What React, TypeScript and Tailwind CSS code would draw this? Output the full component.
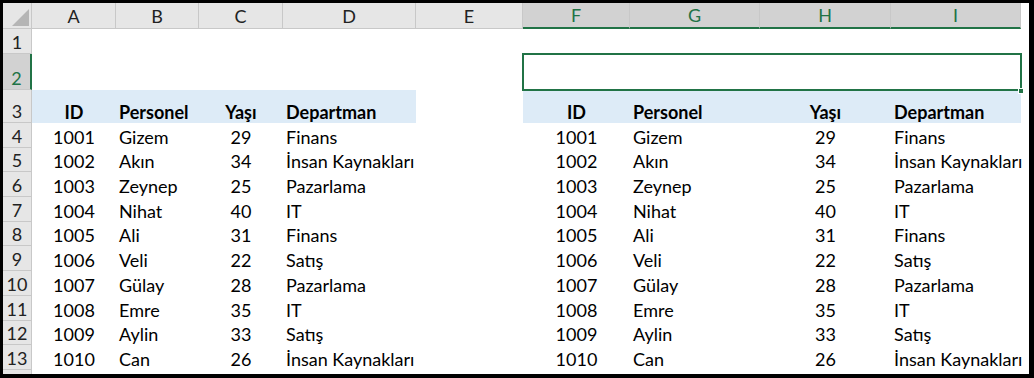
import React from "react";

const cols = ["A", "B", "C", "D", "E", "F", "G", "H", "I"];
const selCols = ["F", "G", "H", "I"];

const people = [
  ["1001", "Gizem", "29", "Finans"],
  ["1002", "Akın", "34", "İnsan Kaynakları"],
  ["1003", "Zeynep", "25", "Pazarlama"],
  ["1004", "Nihat", "40", "IT"],
  ["1005", "Ali", "31", "Finans"],
  ["1006", "Veli", "22", "Satış"],
  ["1007", "Gülay", "28", "Pazarlama"],
  ["1008", "Emre", "35", "IT"],
  ["1009", "Aylin", "33", "Satış"],
  ["1010", "Can", "26", "İnsan Kaynakları"],
];

function RowHead({ n, h, active }: { n?: number; h: string; active?: boolean }) {
  return (
    <div
      className={`${h} flex items-end justify-center pb-[2px] border-b border-[#c8c8c8] ${
        active
          ? "bg-[#d2d2d2] text-[#217346] border-r-2 border-r-[#217346]"
          : "bg-[#e6e6e6] text-[#222] border-r border-r-[#c8c8c8]"
      }`}
    >
      {n}
    </div>
  );
}

function Cell({ children, align = "left", h, bold }: { children?: React.ReactNode; align?: "left" | "center"; h: string; bold?: boolean }) {
  return (
    <div
      className={`${h} flex items-end pb-[2px] whitespace-nowrap overflow-visible ${
        align === "center" ? "justify-center" : "justify-start pl-[3px]"
      } ${bold ? "font-bold" : ""}`}
    >
      {children}
    </div>
  );
}

export default function App() {
  const rowH = "h-[24.7px]";
  return (
    <div className="w-[1034px] h-[378px] bg-white overflow-hidden border-black border-l-[3px] border-t-[3px] border-r-[5px] border-b-[4px] font-['Lato','Liberation_Sans',sans-serif] text-[18px] leading-none text-black">
      <div className="grid grid-cols-[29px_84px_83px_84px_133px_107px_107px_130px_131px_130px_1fr]">
        {/* column headers */}
        <div className="h-[26px] bg-[#e6e6e6] border-b border-r border-[#c8c8c8] relative flex items-end justify-end p-[2px]">
          <svg width="17" height="17" viewBox="0 0 17 17">
            <polygon points="17,0 17,17 0,17" fill="#b5b5b5" />
          </svg>
        </div>
        {cols.map((c) => {
          const sel = selCols.includes(c);
          return (
            <div
              key={c}
              className={`h-[26px] flex items-center justify-center border-r border-[#c8c8c8] ${
                sel
                  ? "bg-[#d2d2d2] text-[#217346] border-b-2 border-b-[#217346]"
                  : "bg-[#e6e6e6] text-[#222] border-b border-b-[#c8c8c8]"
              }`}
            >
              {c}
            </div>
          );
        })}
        <div className="h-[26px] bg-white" />

        {/* row 1 */}
        <RowHead n={1} h="h-[25px]" />
        {Array.from({ length: 10 }).map((_, i) => (
          <div key={i} className="h-[25px]" />
        ))}

        {/* row 2 */}
        <RowHead n={2} h="h-[36px]" active />
        {Array.from({ length: 5 }).map((_, i) => (
          <div key={i} className="h-[36px]" />
        ))}
        <div className="col-span-4 h-[36px] relative">
          <div className="absolute -left-[1px] -top-[1px] -right-[1px] -bottom-[1px] border-2 border-[#217346]" />
          <div className="absolute -right-[3px] -bottom-[4px] w-[6px] h-[6px] bg-[#217346] border border-white" />
        </div>
        <div className="h-[36px]" />

        {/* row 3 headers */}
        <RowHead n={3} h="h-[33px]" />
        <div className="col-span-4 h-[33px] bg-[#ddebf7] grid grid-cols-[84px_83px_84px_133px]">
          <Cell h="h-[33px]" align="center" bold>ID</Cell>
          <Cell h="h-[33px]" bold>Personel</Cell>
          <Cell h="h-[33px]" align="center" bold>Yaşı</Cell>
          <Cell h="h-[33px]" bold>Departman</Cell>
        </div>
        <div className="h-[33px]" />
        <div className="col-span-4 h-[33px] bg-[#ddebf7] grid grid-cols-[107px_130px_131px_130px]">
          <Cell h="h-[33px]" align="center" bold>ID</Cell>
          <Cell h="h-[33px]" bold>Personel</Cell>
          <Cell h="h-[33px]" align="center" bold>Yaşı</Cell>
          <Cell h="h-[33px]" bold>Departman</Cell>
        </div>
        <div className="h-[33px]" />

        {people.map((p, i) => (
          <React.Fragment key={p[0]}>
            <RowHead n={i + 4} h={rowH} />
            <Cell h={rowH} align="center">{p[0]}</Cell>
            <Cell h={rowH}>{p[1]}</Cell>
            <Cell h={rowH} align="center">{p[2]}</Cell>
            <Cell h={rowH}>{p[3]}</Cell>
            <div className={rowH} />
            <Cell h={rowH} align="center">{p[0]}</Cell>
            <Cell h={rowH}>{p[1]}</Cell>
            <Cell h={rowH} align="center">{p[2]}</Cell>
            <Cell h={rowH}>{p[3]}</Cell>
            <div className={rowH} />
          </React.Fragment>
        ))}

        {/* row 14, only its top edge shows */}
        <RowHead h="h-[25px]" />
      </div>
    </div>
  );
}
